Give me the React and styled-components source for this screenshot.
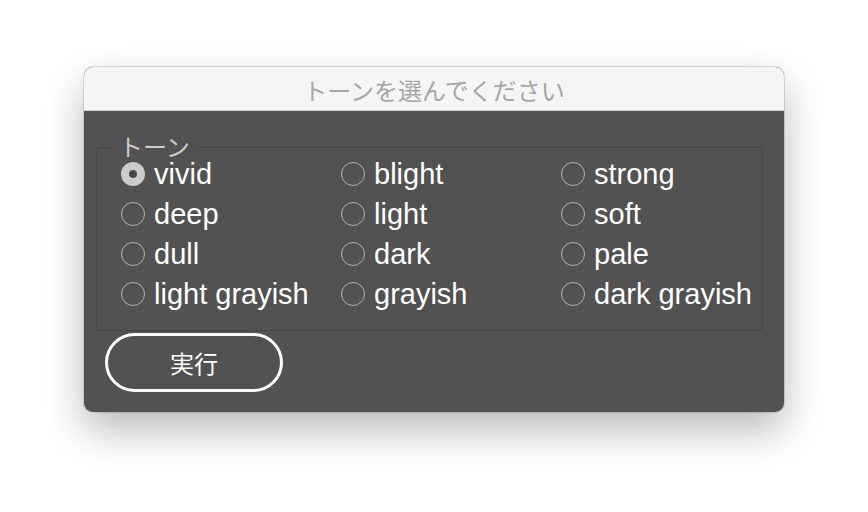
import styled, { createGlobalStyle } from "styled-components";
import { useState } from "react";

const GlobalStyle = createGlobalStyle`
  html, body {
    margin: 0;
    padding: 0;
    background: #ffffff;
  }
  body {
    font-family: "Liberation Sans", "Noto Sans CJK JP", sans-serif;
  }
`;

const tones = [
  "vivid", "blight", "strong",
  "deep", "light", "soft",
  "dull", "dark", "pale",
  "light grayish", "grayish", "dark grayish",
];

function App() {
  const [tone, setTone] = useState("vivid");

  return (
    <Page>
      <GlobalStyle />
      <Window>
        <TitleBar>トーンを選んでください</TitleBar>
        <Body>
          <Group>
            <Legend>トーン</Legend>
            <Grid>
              {tones.map((t) => (
                <Option key={t} onClick={() => setTone(t)}>
                  <Radio $checked={tone === t} />
                  <Label>{t}</Label>
                </Option>
              ))}
            </Grid>
          </Group>
          <RunButton>実行</RunButton>
        </Body>
      </Window>
    </Page>
  );
}

const Page = styled.div`
  width: 868px;
  height: 512px;
  padding-top: 67px;
  box-sizing: border-box;
  display: flex;
  justify-content: center;
  align-items: flex-start;
`;

const Window = styled.div`
  width: 700px;
  border-radius: 9px;
  overflow: hidden;
  background: #525252;
  box-shadow: 0 18px 40px rgba(0, 0, 0, 0.28), 0 0 0 1px rgba(0, 0, 0, 0.12);
`;

const TitleBar = styled.div`
  height: 44px;
  background: #f5f5f5;
  border-bottom: 1px solid #cfcfcf;
  display: flex;
  align-items: center;
  justify-content: center;
  color: #a6a6a6;
  font-family: "Noto Sans CJK JP", sans-serif;
  font-size: 24px;
  padding-top: 2px;
  box-sizing: border-box;
`;

const Body = styled.div`
  padding: 36px 21px 20px 12px;
  display: flex;
  flex-direction: column;
  align-items: flex-start;
`;

const Group = styled.div`
  position: relative;
  align-self: stretch;
  border: 1px solid #464646;
  border-radius: 4px;
  padding: 6px 0 16px 24px;
`;

const Legend = styled.span`
  position: absolute;
  top: -14px;
  left: 13px;
  padding: 0 9px;
  background: #525252;
  color: #cdcdcd;
  font-family: "Noto Sans CJK JP", sans-serif;
  font-size: 24px;
  line-height: 24px;
`;

const Grid = styled.div`
  display: grid;
  grid-template-columns: repeat(3, 220px);
  grid-auto-rows: 40px;
`;

const Option = styled.div`
  display: flex;
  align-items: center;
  gap: 9px;
  cursor: default;
`;

const Radio = styled.span`
  width: 24px;
  height: 24px;
  border-radius: 50%;
  box-sizing: border-box;
  flex: none;
  border: ${(p) => (p.$checked ? "8px solid #cbcbcb" : "1.5px solid #b4b4b4")};
  background: ${(p) => (p.$checked ? "#4a4a4a" : "transparent")};
`;

const Label = styled.span`
  color: #ffffff;
  font-size: 29px;
  line-height: 40px;
  white-space: nowrap;
`;

const RunButton = styled.button`
  margin: 2px 0 0 9px;
  width: 178px;
  height: 59px;
  border: 3px solid #ffffff;
  border-radius: 30px;
  background: transparent;
  color: #ffffff;
  font-family: "Noto Sans CJK JP", sans-serif;
  font-size: 24px;
  padding: 0;
`;

export default App;
